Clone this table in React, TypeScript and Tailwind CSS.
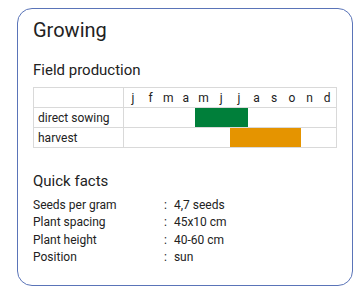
const months = ["j", "f", "m", "a", "m", "j", "j", "a", "s", "o", "n", "d"];

const rows = [
  { label: "direct sowing", from: 4, to: 6, color: "bg-[#007f3a]" },
  { label: "harvest", from: 6, to: 9, color: "bg-[#e59400]" },
];

const facts = [
  ["Seeds per gram", "4,7 seeds"],
  ["Plant spacing", "45x10 cm"],
  ["Plant height", "40-60 cm"],
  ["Position", "sun"],
];

export default function App() {
  return (
    <div className="h-[292px] w-[358px] bg-white pt-[8px] pl-[17px] font-['Roboto',sans-serif] text-[#222]">
      <div className="h-[278px] w-[336px] rounded-[15px] border border-[#5a74b8] px-[15px] pt-[9px]">
        <h1 className="text-[20px] leading-[24px]">Growing</h1>

        <h2 className="mt-[18px] text-[15px] leading-[20px]">Field production</h2>
        <div className="mt-[7px] w-[304px] border border-[#d9d9d9] text-[12px]">
          <div className="flex h-[19px]">
            <div className="w-[90px] border-r border-[#d9d9d9]" />
            <div className="grid flex-1 grid-cols-12">
              {months.map((m, i) => (
                <div key={i} className="flex items-center justify-center leading-none">
                  {m}
                </div>
              ))}
            </div>
          </div>
          {rows.map((r) => (
            <div key={r.label} className="flex h-[20px] border-t border-[#d9d9d9]">
              <div className="flex w-[90px] items-center border-r border-[#d9d9d9] pl-[4px]">
                {r.label}
              </div>
              <div className="grid flex-1 grid-cols-12">
                {months.map((_, i) => (
                  <div key={i} className={i >= r.from && i <= r.to ? r.color : ""} />
                ))}
              </div>
            </div>
          ))}
        </div>

        <h2 className="mt-[23px] text-[15px] leading-[20px]">Quick facts</h2>
        <div className="mt-[6px] text-[12px] leading-[17.4px]">
          {facts.map(([k, v]) => (
            <div key={k} className="flex">
              <span className="w-[131px]">{k}</span>
              <span>:</span>
              <span className="ml-[7px]">{v}</span>
            </div>
          ))}
        </div>
      </div>
    </div>
  );
}
